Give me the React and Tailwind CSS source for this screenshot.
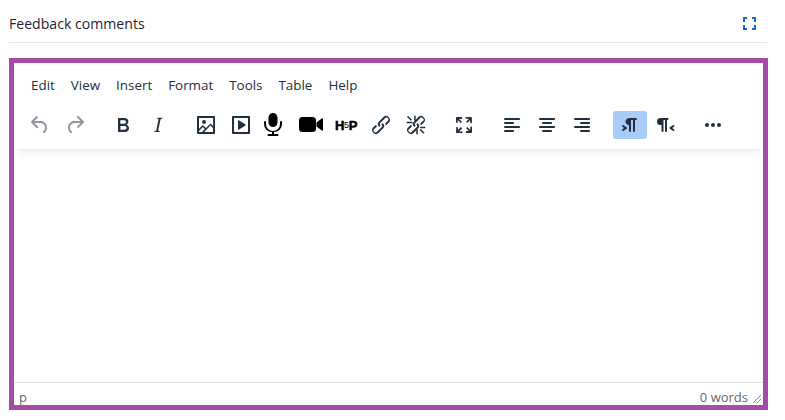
const Icon = ({ d, className = '' }) => (
  <svg width="24" height="24" viewBox="0 0 24 24" className={className} fill="currentColor">
    <path d={d} />
  </svg>
);

const paths = {
  undo: 'M6.4 8H12c3.7 0 6.2 2 6.8 5.1.6 2.7-.4 5.6-2.3 6.8a1 1 0 0 1-1-1.8c1.1-.6 1.8-2.7 1.4-4.6-.5-2.1-2.1-3.5-4.9-3.5H6.4l3.3 3.3a1 1 0 1 1-1.4 1.4l-5-5a1 1 0 0 1 0-1.4l5-5a1 1 0 0 1 1.4 1.4L6.4 8Z',
  redo: 'M17.6 10H12c-2.8 0-4.4 1.4-4.9 3.5-.4 2 .3 4 1.4 4.6a1 1 0 1 1-1 1.8c-2-1.2-2.9-4.1-2.3-6.8.6-3 3-5.1 6.8-5.1h5.6l-3.3-3.3a1 1 0 1 1 1.4-1.4l5 5a1 1 0 0 1 0 1.4l-5 5a1 1 0 0 1-1.4-1.4l3.3-3.3Z',
  bold: 'M7.8 19c-.3 0-.5 0-.6-.2l-.2-.5V5.7c0-.2 0-.4.2-.5l.6-.2h5c1.5 0 2.7.3 3.5 1 .7.6 1.1 1.4 1.1 2.5a3 3 0 0 1-.6 1.9c-.4.6-1 1-1.6 1.2.4.1.9.3 1.3.6s.8.7 1 1.2c.4.4.5 1 .5 1.6 0 1.3-.4 2.3-1.3 3-.8.7-2.1 1-3.8 1H7.8Zm5-8.3c.6 0 1.2-.1 1.6-.5.4-.3.6-.7.6-1.3 0-1.1-.8-1.7-2.3-1.7H9.3v3.5h3.4Zm.5 6c.7 0 1.3-.1 1.7-.4.4-.4.6-.9.6-1.5s-.2-1-.7-1.4c-.4-.3-1-.4-2-.4H9.4v3.8h4Z',
  italic: 'M16.7 4.7l-.1.9h-.3c-.6 0-1 0-1.4.3-.3.3-.4.6-.5 1.1l-2.1 9.8v.6c0 .5.4.8 1.4.8h.2l-.2.8H8l.2-.8h.2c1.1 0 1.8-.5 2-1.5l2-9.8.1-.5c0-.6-.4-.8-1.4-.8h-.3l.2-.9h5.8Z',
  image: 'M5 15.7l3.3-3.2c.3-.3.7-.3 1 0L12 15l4.1-4c.3-.4.8-.4 1 0l2 1.9V5H5v10.7ZM5 18V19h3l2.8-2.9-2-2L5 17.9Zm14-3l-2.5-2.4-6.4 6.5H19v-4ZM4 3h16c.6 0 1 .4 1 1v16c0 .6-.4 1-1 1H4a1 1 0 0 1-1-1V4c0-.6.4-1 1-1Zm6 8a2 2 0 1 0 0-4 2 2 0 0 0 0 4Z',
  media: 'M4 3h16c.6 0 1 .4 1 1v16c0 .6-.4 1-1 1H4a1 1 0 0 1-1-1V4c0-.6.4-1 1-1Zm1 2v14h14V5H5Zm4 2.6c0-.4.4-.6.7-.4l6.8 4.4c.3.2.3.6 0 .8l-6.8 4.4c-.3.2-.7 0-.7-.4V7.6Z',
  mic: 'M12 0a4.5 4.5 0 0 0-4.5 4.5v5a4.5 4.5 0 0 0 9 0v-5A4.5 4.5 0 0 0 12 0ZM4 8a1 1 0 0 0-1 1v2a8 8 0 0 0 8 8v2H7.500a1 1 0 0 0 0 2h9a1 1 0 0 0 0-2H13v-2a8 8 0 0 0 8-8V9a1 1 0 0 0-2 0v2a7 7 0 0 1-14 0V9a1 1 0 0 0-1-1Z',
  video: 'M3.500 4h10A3.500 3.500 0 0 1 17 7.500v8a3.500 3.500 0 0 1-3.500 3.500h-10A3.500 3.500 0 0 1 0 15.500v-8A3.500 3.500 0 0 1 3.500 4ZM17.500 9.500l5.300-4c.500-.4 1.200 0 1.200.6v10.800c0 .6-.7 1-1.200.6l-5.300-4v-4Z',
  link: 'M6.200 12.300a1 1 0 0 1 1.400 1.400l-2 2a2 2 0 1 0 2.600 2.800l4.800-4.800a1 1 0 0 0 0-1.400 1 1 0 1 1 1.400-1.300 2.900 2.900 0 0 1 0 4L9.600 20a3.900 3.900 0 0 1-5.500-5.500l2-2Zm11.600-.6a1 1 0 0 1-1.400-1.400l2-2a2 2 0 1 0-2.600-2.800L11 10.300a1 1 0 0 0 0 1.400A1 1 0 1 1 9.600 13a2.900 2.900 0 0 1 0-4L14.400 4a3.900 3.900 0 0 1 5.500 5.500l-2 2Z',
  unlink: 'M6.200 12.300a1 1 0 0 1 1.400 1.400l-2.100 2a2 2 0 1 0 2.700 2.800l4.800-4.800a1 1 0 0 0 0-1.400 1 1 0 1 1 1.400-1.300 2.900 2.900 0 0 1 0 4L9.600 20a3.900 3.900 0 0 1-5.500-5.500l2-2Zm11.600-.6a1 1 0 0 1-1.400-1.400l2.100-2a2 2 0 1 0-2.700-2.800L11 10.300a1 1 0 0 0 0 1.400A1 1 0 1 1 9.600 13a2.900 2.900 0 0 1 0-4L14.400 4a3.900 3.900 0 0 1 5.500 5.500l-2 2ZM7.600 6.300a.8.8 0 0 1-1 1.100L3.700 4.600a.8.8 0 1 1 1-1.100l2.900 2.800Zm-.1 4H3.100a.8.8 0 0 1 0-1.500h4.400a.8.8 0 1 1 0 1.500Zm2.700-3V2.900a.8.8 0 0 1 1.500 0v4.400a.8.8 0 0 1-1.500 0ZM16.400 17.700a.8.8 0 1 1 1-1.100l2.900 2.800a.8.8 0 0 1-1 1.100l-2.900-2.800Zm.1-4h4.400a.8.8 0 0 1 0 1.500h-4.400a.8.8 0 0 1 0-1.500Zm-2.700 3v4.400a.8.8 0 0 1-1.500 0v-4.400a.8.8 0 0 1 1.500 0Z',
  fullscreen: 'M15.300 10l-1.200-1.300 2.900-3h-2.300a.9.9 0 1 1 0-1.700H19c.5 0 .9.4.9.9v4.400a.9.9 0 1 1-1.800 0V7l-2.900 3Zm0 4l3 3v-2.300a.9.9 0 1 1 1.700 0V19c0 .5-.4.900-.9.900h-4.400a.9.9 0 1 1 0-1.800H17l-3-2.900 1.300-1.200ZM10 15.400l-2.900 3h2.300a.9.9 0 1 1 0 1.700H5a.9.9 0 0 1-.9-.9v-4.400a.9.9 0 1 1 1.800 0V17l2.900-3 1.200 1.300ZM8.700 10L5.700 7v2.300a.9.9 0 0 1-1.700 0V5c0-.5.4-.9.9-.9h4.400a.9.9 0 0 1 0 1.800H7l3 2.900-1.300 1.200Z',
  alignLeft: 'M5 5h14c.6 0 1 .4 1 1s-.4 1-1 1H5a1 1 0 1 1 0-2Zm0 4h8c.6 0 1 .4 1 1s-.4 1-1 1H5a1 1 0 1 1 0-2Zm0 8h8c.6 0 1 .4 1 1s-.4 1-1 1H5a1 1 0 0 1 0-2Zm0-4h14c.6 0 1 .4 1 1s-.4 1-1 1H5a1 1 0 0 1 0-2Z',
  alignCenter: 'M5 5h14c.6 0 1 .4 1 1s-.4 1-1 1H5a1 1 0 1 1 0-2Zm3 4h8c.6 0 1 .4 1 1s-.4 1-1 1H8a1 1 0 1 1 0-2Zm0 8h8c.6 0 1 .4 1 1s-.4 1-1 1H8a1 1 0 0 1 0-2Zm-3-4h14c.6 0 1 .4 1 1s-.4 1-1 1H5a1 1 0 0 1 0-2Z',
  alignRight: 'M5 5h14c.6 0 1 .4 1 1s-.4 1-1 1H5a1 1 0 1 1 0-2Zm6 4h8c.6 0 1 .4 1 1s-.4 1-1 1h-8a1 1 0 0 1 0-2Zm0 8h8c.6 0 1 .4 1 1s-.4 1-1 1h-8a1 1 0 0 1 0-2Zm-6-4h14c.6 0 1 .4 1 1s-.4 1-1 1H5a1 1 0 0 1 0-2Z',
  ltr: 'M11 5h7a1 1 0 0 1 0 2h-1v11a1 1 0 0 1-2 0V7h-2v11a1 1 0 0 1-2 0v-6c-.5 0-1 0-1.400-.3A3.400 3.400 0 0 1 7.800 10a3.300 3.300 0 0 1 0-2.800 3.400 3.400 0 0 1 1.800-1.800L11 5ZM4.400 16.200L6.200 15l-1.800-1.200a1 1 0 0 1 1.200-1.600l3 2a1 1 0 0 1 0 1.600l-3 2a1 1 0 1 1-1.200-1.600Z',
  rtl: 'M7.500 5h7a1 1 0 0 1 0 2H14v11a1 1 0 0 1-2 0V7h-1.500v11a1 1 0 0 1-2 0v-6h-1a3.500 3.500 0 0 1 0-7ZM21 16.200L19.200 15 21 13.800a1 1 0 0 0-1.200-1.600l-3 2a1 1 0 0 0 0 1.600l3 2a1 1 0 1 0 1.200-1.600Z',
  more: 'M6 10a2 2 0 0 0-2 2c0 1.100.9 2 2 2a2 2 0 0 0 2-2 2 2 0 0 0-2-2Zm12 0a2 2 0 0 0-2 2c0 1.100.9 2 2 2a2 2 0 0 0 2-2 2 2 0 0 0-2-2Zm-6 0a2 2 0 0 0-2 2c0 1.100.9 2 2 2a2 2 0 0 0 2-2 2 2 0 0 0-2-2Z',
};

const menus = ['Edit', 'View', 'Insert', 'Format', 'Tools', 'Table', 'Help'];

const H5P = () => (
  <span className="flex items-center font-['Liberation_Sans',sans-serif] text-[13px] leading-none font-bold tracking-[-0.3px] text-black [-webkit-text-stroke:0.5px_black]">
    H<span className="text-[9px] font-normal [-webkit-text-stroke:0px_black]">5</span>P
  </span>
);

const ToolButton = ({ children, active, muted, w = 'w-[34px]' }) => (
  <button
    type="button"
    className={`flex h-[28px] ${w} items-center justify-center rounded-[3px] ${active ? 'bg-[#a6ccf7]' : ''} ${muted ? 'text-[#222f3e]/50' : 'text-[#222f3e]'}`}
  >
    {children}
  </button>
);

const groups = [
  [
    { d: paths.undo, muted: true },
    { d: paths.redo, muted: true },
  ],
  [{ d: paths.bold }, { d: paths.italic }],
  [
    { d: paths.image },
    { d: paths.media },
    { d: paths.mic, black: true, w: 'w-[28px]' },
    { d: paths.video, black: true, w: 'w-[40px] pl-[6px]' },
    { h5p: true },
    { d: paths.link },
    { d: paths.unlink },
  ],
  [{ d: paths.fullscreen }],
  [{ d: paths.alignLeft }, { d: paths.alignCenter }, { d: paths.alignRight }],
  [{ d: paths.ltr, active: true }, { d: paths.rtl }],
  [{ d: paths.more }],
];

export default function App() {
  return (
    <div className="h-[420px] w-[785px] overflow-hidden bg-white pl-[9px] font-['Open_Sans',sans-serif] text-[#222f3e]">
      {/* Header */}
      <div className="flex h-[43px] w-[758px] items-center justify-between border-b border-[#e3e3e3] pt-[5px]">
        <span className="text-[14.1px] text-[#1f2433]">Feedback comments</span>
        <svg width="13" height="13" viewBox="0 0 13 13" fill="none" stroke="#0f6cd8" strokeWidth="2" className="mr-[11px]">
          <path d="M1 5V1h3M9 1h3v4M12 8v4H9M4 12H1V8" />
        </svg>
      </div>

      {/* Editor */}
      <div className="mt-[15px] flex h-[352px] w-[759px] flex-col border-[5px] border-[#a64ca6] bg-white">
        <div className="relative z-10 h-[86px] shadow-[0_2px_2px_-2px_rgba(34,47,62,0.1),0_8px_8px_-4px_rgba(34,47,62,0.07)]">
          <div className="flex h-[46px] items-center pl-[9px]">
            {menus.map((m) => (
              <span key={m} className="px-[8px] text-[13.4px] leading-none">
                {m}
              </span>
            ))}
          </div>
          <div className="flex pt-[2px] pl-[9px]">
            {groups.map((group, i) => (
              <div key={i} className="flex gap-[1px] pr-[14px]">
                {group.map((b, j) => (
                  <ToolButton key={j} active={b.active} muted={b.muted} w={b.w}>
                    {b.h5p ? <H5P /> : <Icon d={b.d} className={b.black ? 'text-black' : ''} />}
                  </ToolButton>
                ))}
              </div>
            ))}
          </div>
        </div>

        <div className="flex-1" />

        {/* Status bar */}
        <div className="relative flex h-[23px] items-end justify-between border-t border-[#e3e3e3] pr-[15px] pl-[5px] text-[13px] leading-[16px] text-[#222f3e]/75">
          <span>p</span>
          <span>0 words</span>
          <svg width="10" height="10" viewBox="0 0 10 10" className="absolute right-[1px] bottom-[1px]" stroke="#8a8f96" strokeWidth="1" fill="none">
            <path d="M1 9L9 1M5 9L9 5" />
          </svg>
        </div>
      </div>
    </div>
  );
}
